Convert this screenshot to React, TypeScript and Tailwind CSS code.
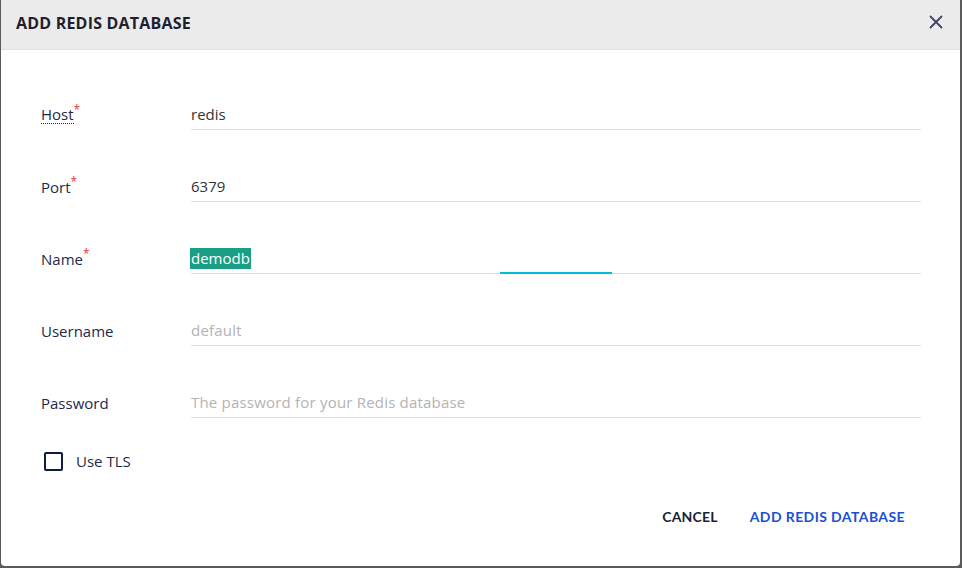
import React from 'react';

const FONT = { fontFamily: '"Open Sans", Lato, "Noto Sans", sans-serif' };
const BTN = { fontFamily: 'Lato, "Open Sans", sans-serif' };

interface FieldProps {
  label: string;
  required?: boolean;
  dotted?: boolean;
  value?: string;
  placeholder?: string;
  selected?: boolean;
}

const Field: React.FC<FieldProps> = ({ label, required, dotted, value, placeholder, selected }) => (
  <div className="flex items-end h-[32px]">
    <div className="w-[150px] h-[31px] flex items-center text-[15px] text-[#1c2a4a]">
      <span className={dotted ? 'border-b border-dotted border-[#1c2a4a] leading-[18px]' : 'leading-[18px]'}>{label}</span>
      {required && <span className="text-[#e53935] text-[12px] self-start mt-[2px]">*</span>}
    </div>
    <div className="relative flex-1 h-[31px] flex items-center border-b border-[#dcdcdc] text-[15px]">
      {value && (
        <span className={selected ? 'bg-[#1a9e85] text-white px-[1px] -ml-[1px] leading-[21px]' : 'text-[#333]'}>{value}</span>
      )}
      {!value && placeholder && <span className="text-[#b3b3b3] tracking-[0.2px]">{placeholder}</span>}
      {selected && <div className="absolute left-[309px] w-[112px] -bottom-[1px] h-[2px] bg-[#00bcd4]" />}
    </div>
  </div>
);

export default function App() {
  return (
    <div className="w-[962px] h-[568px] bg-[#5b5b5b] pl-[1px]" style={FONT}>
      <div className="w-[959px] h-[566px] bg-white rounded-b-[4px] flex flex-col overflow-hidden">
        <div className="h-[50px] bg-[#ebebeb] border-b border-[#e0e0e0] flex items-center justify-between pl-[15px] pr-[17px]">
          <span className="text-[16px] font-bold text-[#1f1f2e] tracking-[0.2px] mt-[-4px]">ADD REDIS DATABASE</span>
          <svg width="14" height="14" viewBox="0 0 14 14" className="mt-[-6px]">
            <path d="M1.5 1.5 L12.5 12.5 M12.5 1.5 L1.5 12.5" stroke="#3a4560" strokeWidth="1.8" strokeLinecap="round" />
          </svg>
        </div>
        <div className="flex flex-col gap-[40px] pl-[40px] pr-[39px] pt-[48px]">
          <Field label="Host" required dotted value="redis" />
          <Field label="Port" required value="6379" />
          <Field label="Name" required value="demodb" selected />
          <Field label="Username" placeholder="default" />
          <Field label="Password" placeholder="The password for your Redis database" />
        </div>
        <div className="flex items-center pl-[43px] mt-[33px] h-[20px]">
          <div className="w-[19px] h-[19px] border-2 border-[#0f1c3f] rounded-[2px]" />
          <span className="ml-[13px] text-[15px] text-[#1c2a4a]">Use TLS</span>
        </div>
        <div className="flex justify-end items-center gap-[32px] pr-[55px] mt-[35px]" style={BTN}>
          <span className="text-[14px] font-bold text-[#1a1f36] tracking-[0.2px]">CANCEL</span>
          <span className="text-[14px] font-bold text-[#1b51d1] tracking-[0.4px]">ADD REDIS DATABASE</span>
        </div>
      </div>
    </div>
  );
}
